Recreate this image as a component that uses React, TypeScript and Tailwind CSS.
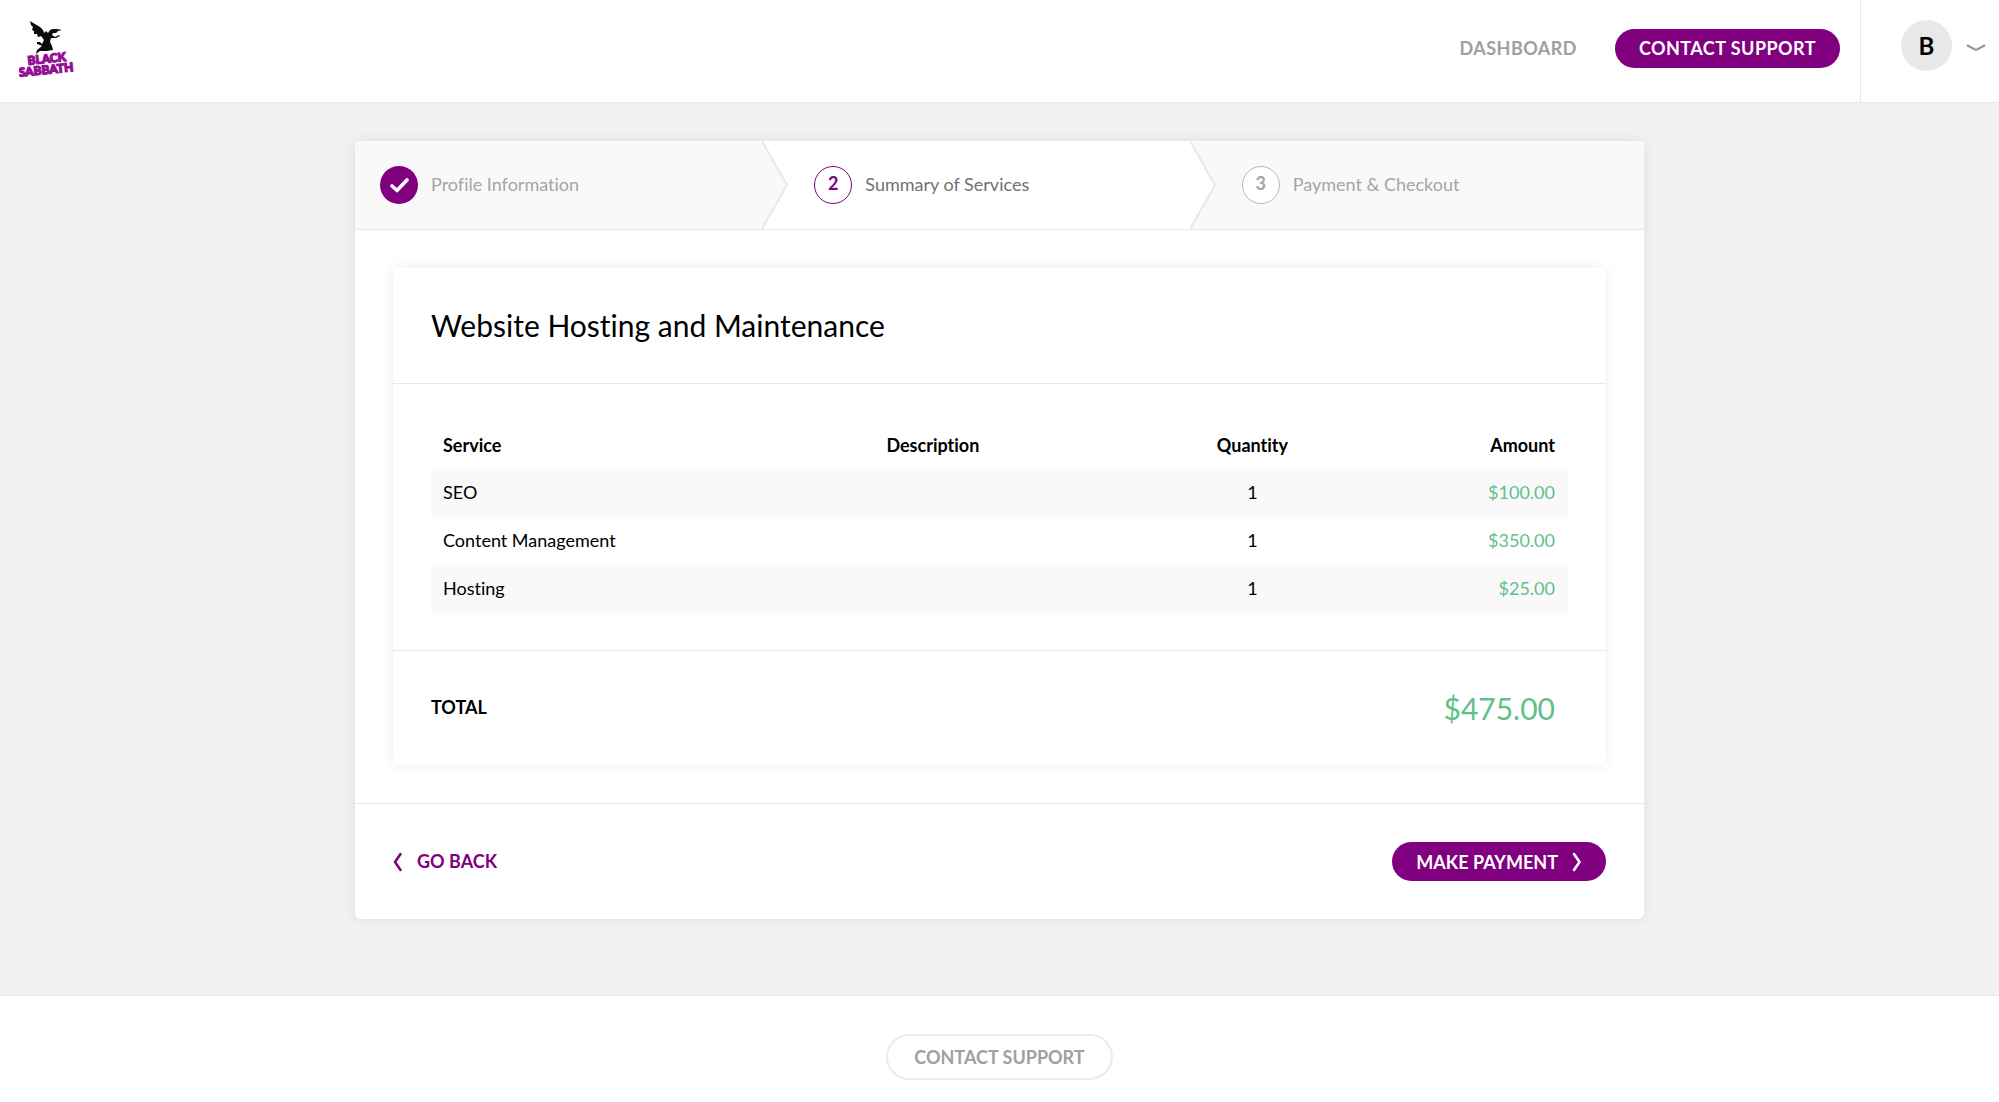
import React from 'react';

interface Service {
  name: string;
  description: string;
  quantity: number;
  amount: string;
}

const SERVICES: Service[] = [
  { name: 'SEO', description: '', quantity: 1, amount: '$100.00' },
  { name: 'Content Management', description: '', quantity: 1, amount: '$350.00' },
  { name: 'Hosting', description: '', quantity: 1, amount: '$25.00' },
];

const Logo: React.FC = () => (
  <svg width="60" height="62" viewBox="0 0 60 62" role="img" aria-label="Black Sabbath">
    <path
      d="M11 1 L16 4 L21 7 L24 10 L25 13 L27 11 L29 13 L31 10 L34 9 L38 9 L43 10 L39 11 L37 13 L34 13 L33 15 L36 17 L40 15 L41 16 L37 18 L32 18 L31 22 L33 26 L34 30 L28 31 L21 31 L17 34 L18 30 L23 26 L21 25 L18 24 L18 22 L21 22 L23 24 L25 20 L22 16 L19 17 L18 14 L15 14 L15 11 L13 10 L14 7 L12 5 Z"
      fill="#0b0b0b"
    />
    <g
      fill="#930d95"
      stroke="#930d95"
      strokeWidth="1.2"
      fontFamily="Lato, sans-serif"
      fontWeight="900"
      transform="rotate(-6 27 44)"
    >
      <text x="9" y="43" fontSize="12">BLACK</text>
      <text x="-1" y="54" fontSize="12">SABBATH</text>
    </g>
  </svg>
);

const StepArrow: React.FC<{ left: string; right: string }> = ({ left, right }) => (
  <svg className="h-full w-[26px] shrink-0" viewBox="0 0 26 88" preserveAspectRatio="none" aria-hidden="true">
    <rect width="26" height="88" fill={right} />
    <path d="M0 0 L25 44 L0 88 Z" fill={left} />
    <path d="M0 0 L25 44 L0 88" fill="none" stroke="#e8e8e8" strokeWidth="2" />
  </svg>
);

export default function App() {
  return (
    <div className="flex min-h-screen flex-col bg-[#f1f1f1] font-['Lato',sans-serif] text-lg text-black [font-variant-ligatures:none]">
      {/* Header */}
      <header className="flex h-[103px] items-stretch justify-between border-b border-[#e8e8e8] bg-white">
        <a href="#" className="pt-5 pl-[19px]">
          <Logo />
        </a>
        <div className="flex">
          <nav className="flex items-start gap-[38px] pt-[29px] pr-5">
            <a href="#" className="font-bold leading-[38px] tracking-wide text-[#a0a0a0]">DASHBOARD</a>
            <button className="h-[39px] rounded-full bg-[#800080] px-6 pb-0.5 font-bold tracking-wide text-white">
              CONTACT SUPPORT
            </button>
          </nav>
          <button aria-label="Account menu" className="flex items-start gap-[14px] border-l border-[#e8e8e8] pt-5 pr-[13px] pl-10">
            <span className="flex size-[51px] items-center justify-center rounded-full bg-[#e8e8e8] text-2xl font-bold">B</span>
            <svg className="mt-6" width="20" height="8" viewBox="0 0 20 8" aria-hidden="true">
              <path d="M1.5 1.5 L9 5.5 Q10 6 11 5.5 L18.5 1.5" fill="none" stroke="#999" strokeWidth="2" strokeLinecap="round" strokeLinejoin="round" />
            </svg>
          </button>
        </div>
      </header>

      {/* Checkout */}
      <main className="flex-1 pt-[38px] pb-[76px]">
        <div className="mx-auto w-full max-w-[1289px] rounded-md bg-white shadow-[0_0_13px_rgba(0,0,0,0.08)]">
          <ol className="grid h-[89px] grid-cols-[433fr_427fr_428fr] border-b border-[#e8e8e8]">
            <li className="flex">
              <div className="flex flex-1 items-center gap-[13px] bg-[#f9f9f9] pl-[25px] text-[#a5a5a5]">
                <span className="flex size-[38px] items-center justify-center rounded-full bg-[#800080]">
                  <svg width="20" height="16" viewBox="0 0 20 16" aria-hidden="true">
                    <path d="M3 9 L8 13.5 L18 3" fill="none" stroke="#fff" strokeWidth="3.6" strokeLinecap="round" strokeLinejoin="round" />
                  </svg>
                </span>
                <span className="pb-0.5">Profile Information</span>
              </div>
              <StepArrow left="#f9f9f9" right="#ffffff" />
            </li>
            <li className="flex">
              <div className="flex flex-1 items-center gap-[13px] pl-[26px] text-[#717171]">
                <span className="flex size-[38px] items-center justify-center rounded-full border border-[#800080] pb-1 font-bold text-[#800080]">2</span>
                <span className="pb-0.5">Summary of Services</span>
              </div>
              <StepArrow left="#ffffff" right="#f9f9f9" />
            </li>
            <li className="flex items-center gap-[13px] bg-[#f9f9f9] pl-[26px] text-[#a5a5a5]">
              <span className="flex size-[38px] items-center justify-center rounded-full border border-[#b8b8b8] bg-white pb-1 font-bold">3</span>
              <span className="pb-0.5">Payment &amp; Checkout</span>
            </li>
          </ol>

          <div className="p-[38px]">
            <section className="rounded-md bg-white shadow-[0_0_13px_rgba(0,0,0,0.08)]">
              <h1 className="border-b border-[#e8e8e8] p-[38px] text-3xl leading-[39px]">
                Website Hosting and Maintenance
              </h1>
              <div className="px-[38px] pt-[38px] pb-[37px]">
                <table className="w-full table-fixed">
                  <thead>
                    <tr className="h-[47px]">
                      <th className="w-[39%] px-3 pb-0.5 text-left">Service</th>
                      <th className="w-[26%] px-3 pb-0.5 text-left">Description</th>
                      <th className="w-[14.5%] px-3 pb-0.5 text-center">Quantity</th>
                      <th className="px-[13px] pb-0.5 text-right">Amount</th>
                    </tr>
                  </thead>
                  <tbody>
                    {SERVICES.map((service) => (
                      <tr key={service.name} className="h-12 odd:bg-[#f9f9f9]">
                        <td className="px-3 pb-0.5">{service.name}</td>
                        <td className="px-3 pb-0.5">{service.description}</td>
                        <td className="px-3 pb-0.5 text-center">{service.quantity}</td>
                        <td className="px-[13px] pb-0.5 text-right text-[#5fc08a]">{service.amount}</td>
                      </tr>
                    ))}
                  </tbody>
                </table>
              </div>
              <div className="flex h-[115px] items-center justify-between border-t border-[#e8e8e8] pr-[51px] pl-[38px]">
                <span className="pb-0.5 font-bold">TOTAL</span>
                <span className="text-3xl text-[#5fc08a]">$475.00</span>
              </div>
            </section>
          </div>

          <div className="flex items-center justify-between border-t border-[#e8e8e8] p-[38px]">
            <a href="#" className="flex items-center gap-[14px] font-bold text-[#800080]">
              <svg width="10" height="20" viewBox="0 0 10 20" aria-hidden="true">
                <path d="M7.5 2 L2 10 L7.5 18" fill="none" stroke="currentColor" strokeWidth="2.6" strokeLinecap="round" strokeLinejoin="round" />
              </svg>
              <span className="pb-0.5">GO BACK</span>
            </a>
            <button className="flex h-[39px] items-center gap-[14px] rounded-full bg-[#800080] px-6 font-bold text-white">
              MAKE PAYMENT
              <svg width="10" height="20" viewBox="0 0 10 20" aria-hidden="true">
                <path d="M2 2 L7.5 10 L2 18" fill="none" stroke="currentColor" strokeWidth="2.6" strokeLinecap="round" strokeLinejoin="round" />
              </svg>
            </button>
          </div>
        </div>
      </main>

      {/* Footer */}
      <footer className="flex justify-center border-t border-[#e8e8e8] bg-white pt-[38px] pb-[22px]">
        <button className="h-[46px] rounded-full border-2 border-[#ebebeb] px-[26px] font-bold text-[#a0a0a0]">
          CONTACT SUPPORT
        </button>
      </footer>
    </div>
  );
}
